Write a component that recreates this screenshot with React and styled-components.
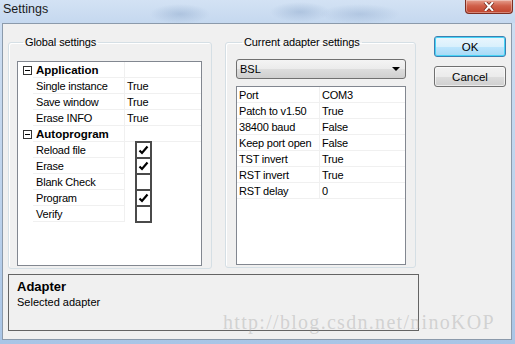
import React from "react";
import styled, { createGlobalStyle } from "styled-components";

const GlobalStyle = createGlobalStyle`
  html, body {
    margin: 0;
    padding: 0;
    background: #fff;
  }
  body {
    font-family: "Liberation Sans", Arial, sans-serif;
    font-size: 11px;
    color: #000;
  }
`;

const Window = styled.div`
  position: relative;
  width: 515px;
  height: 344px;
  display: flex;
  flex-direction: column;
  background: linear-gradient(180deg, #cfdff2 0%, #bcd2ec 60%, #a9c5e6 100%);
  overflow: hidden;
`;

const TitleBar = styled.div`
  height: 23px;
  display: flex;
  justify-content: space-between;
  align-items: flex-start;
  background:
    radial-gradient(ellipse 30px 10px at 180px 14px, rgba(120, 150, 190, 0.35), transparent),
    radial-gradient(ellipse 30px 10px at 300px 12px, rgba(120, 150, 190, 0.35), transparent),
    radial-gradient(ellipse 40px 10px at 360px 14px, rgba(120, 150, 190, 0.3), transparent),
    linear-gradient(180deg, #d3e2f4 0%, #c5d8ef 100%);
`;

const Title = styled.div`
  padding: 2px 0 0 3px;
  font-family: "Liberation Sans", Arial, sans-serif;
  font-size: 12.5px;
  color: #1a1a1a;
`;

const CloseButton = styled.div`
  width: 46px;
  height: 13px;
  margin-right: 2px;
  display: flex;
  align-items: center;
  justify-content: center;
  border: 1px solid #7d2e22;
  border-top: none;
  border-radius: 0 0 4px 4px;
  background: linear-gradient(180deg, #e6a08f 0%, #d0604a 45%, #c0432c 100%);
  box-shadow: inset 0 0 0 1px rgba(255, 255, 255, 0.35);
`;

const Body = styled.div`
  flex: 1;
  margin: 0 3px 4px 2px;
  border: 1px solid #8b9aab;
  background: #f0f0f0;
  padding: 12px 0 8px 5px;
  display: flex;
  flex-direction: column;
  gap: 5px;
`;

const Main = styled.div`
  display: flex;
  align-items: flex-start;
`;

const Group = styled.fieldset`
  margin: 0;
  margin-right: ${(p) => p.$gapRight}px;
  width: ${(p) => p.$width}px;
  box-sizing: border-box;
  border: 1px solid #d5dfe5;
  border-radius: 3px;
  box-shadow: inset 1px 1px 0 #fff;
  padding: ${(p) => p.$padTop}px 9px 2px ${(p) => p.$padLeft}px;
  display: flex;
  flex-direction: column;
  gap: 7px;
`;

const Legend = styled.legend`
  padding: 0 2px;
  margin-left: 6px;
  font-size: 11px;
  letter-spacing: -0.1px;
  line-height: 13px;
`;

const List = styled.div`
  height: ${(p) => p.$height}px;
  box-sizing: border-box;
  border: 1px solid #828790;
  background: #fff;
  display: flex;
  flex-direction: column;
`;

const Row = styled.div`
  display: flex;
  height: 16px;
`;

const Gutter = styled.div`
  width: 15px;
  flex: none;
  display: flex;
  align-items: center;
  padding-left: 5px;
  box-sizing: border-box;
`;

const ExpandBox = styled.div`
  width: 9px;
  height: 9px;
  box-sizing: border-box;
  border: 1px solid #333;
  display: flex;
  align-items: center;
  justify-content: center;
  &::before {
    content: "";
    width: 5px;
    height: 1px;
    background: #000;
  }
`;

const NameCell = styled.div`
  width: ${(p) => p.$width}px;
  flex: none;
  box-sizing: border-box;
  border-bottom: 1px solid #f0f0f0;
  border-right: 1px solid #f0f0f0;
  padding: 1px 0 0 ${(p) => p.$pad}px;
  line-height: 14px;
  white-space: nowrap;
  font-size: ${(p) => (p.$bold ? "11.5px" : "11px")};
  font-weight: ${(p) => (p.$bold ? 700 : 400)};
  letter-spacing: ${(p) => (p.$bold ? "0" : "-0.2px")};
`;

const ValueCell = styled.div`
  flex: 1;
  box-sizing: border-box;
  border-bottom: 1px solid #f0f0f0;
  padding: 1px 0 0 2px;
  line-height: 14px;
  white-space: nowrap;
  letter-spacing: -0.2px;
`;

const CheckCell = styled(ValueCell)`
  padding: 0 0 0 10px;
  border-bottom: none;
`;

const CheckBox = styled.div`
  width: 17px;
  height: 18px;
  margin: -1px 0;
  box-sizing: border-box;
  border: 2px solid #4a4a4a;
  display: flex;
  align-items: center;
  justify-content: center;
  background: #fff;
`;

const Select = styled.div`
  height: 20px;
  box-sizing: border-box;
  border: 1px solid #707070;
  border-radius: 3px;
  background: linear-gradient(180deg, #f4f4f4 0%, #ebebeb 50%, #dddddd 51%, #cfcfcf 100%);
  display: flex;
  align-items: center;
  justify-content: space-between;
  padding: 0 5px 0 3px;
  font-size: 11px;
`;

const Arrow = styled.div`
  width: 0;
  height: 0;
  border-left: 4px solid transparent;
  border-right: 4px solid transparent;
  border-top: 4px solid #000;
`;

const ButtonColumn = styled.div`
  display: flex;
  flex-direction: column;
  gap: 9px;
  width: 72px;
`;

const Button = styled.div`
  height: 21px;
  box-sizing: border-box;
  border-radius: 3px;
  display: flex;
  align-items: center;
  justify-content: center;
  font-size: 11.5px;
  border: 1px solid ${(p) => (p.$focused ? "#3c7fb1" : "#707070")};
  background: ${(p) =>
    p.$focused
      ? "linear-gradient(180deg, #eaf6fd 0%, #d9f0fc 50%, #bee6fd 51%, #a7d9f5 100%)"
      : "linear-gradient(180deg, #f2f2f2 0%, #ebebeb 50%, #dddddd 51%, #cfcfcf 100%)"};
  box-shadow: inset 0 0 0 1px ${(p) => (p.$focused ? "#48d4f6" : "rgba(255,255,255,0.6)")};
`;

const Description = styled.div`
  width: 411px;
  height: 57px;
  box-sizing: border-box;
  border: 1px solid #646464;
  padding: 4px 0 0 8px;
  display: flex;
  flex-direction: column;
`;

const DescTitle = styled.div`
  font-size: 13px;
  font-weight: 700;
  line-height: 15px;
`;

const DescText = styled.div`
  font-size: 11px;
  line-height: 16px;
`;

const Watermark = styled.div`
  position: absolute;
  left: 223px;
  top: 311px;
  font-family: "Liberation Serif", "Times New Roman", serif;
  font-size: 20px;
  letter-spacing: 1.3px;
  color: rgba(160, 160, 160, 0.4);
  pointer-events: none;
`;

const Check = () => (
  <svg width="11" height="10" viewBox="0 0 11 10">
    <path d="M1.5 5.5 L4 8 L9.5 1.5" fill="none" stroke="#000" strokeWidth="2.2" />
  </svg>
);

const CloseX = () => (
  <svg width="12" height="9" viewBox="0 0 12 9">
    <path d="M2 0 L10 9 M10 0 L2 9" stroke="#6b2318" strokeWidth="3.4" />
    <path d="M2 0 L10 9 M10 0 L2 9" stroke="#fff" strokeWidth="2" />
  </svg>
);

const globalSections = [
  {
    title: "Application",
    rows: [
      { name: "Single instance", value: "True" },
      { name: "Save window", value: "True" },
      { name: "Erase INFO", value: "True" },
    ],
  },
  {
    title: "Autoprogram",
    rows: [
      { name: "Reload file", check: true },
      { name: "Erase", check: true },
      { name: "Blank Check", check: false },
      { name: "Program", check: true },
      { name: "Verify", check: false },
    ],
  },
];

const adapterRows = [
  ["Port", "COM3"],
  ["Patch to v1.50", "True"],
  ["38400 baud", "False"],
  ["Keep port open", "False"],
  ["TST invert", "True"],
  ["RST invert", "True"],
  ["RST delay", "0"],
];

export default function App() {
  return (
    <>
      <GlobalStyle />
      <Window>
        <TitleBar>
          <Title>Settings</Title>
          <CloseButton>
            <CloseX />
          </CloseButton>
        </TitleBar>
        <Body>
          <Main>
            <Group $width={204} $gapRight={13} $padTop={12} $padLeft={8}>
              <Legend>Global settings</Legend>
              <List $height={205}>
                {globalSections.map((section) => (
                  <React.Fragment key={section.title}>
                    <Row>
                      <Gutter>
                        <ExpandBox />
                      </Gutter>
                      <NameCell $width={92} $pad={3} $bold>
                        {section.title}
                      </NameCell>
                      <ValueCell />
                    </Row>
                    {section.rows.map((r) => (
                      <Row key={r.name}>
                        <Gutter />
                        <NameCell $width={92} $pad={3}>
                          {r.name}
                        </NameCell>
                        {"check" in r ? (
                          <CheckCell>
                            <CheckBox>{r.check && <Check />}</CheckBox>
                          </CheckCell>
                        ) : (
                          <ValueCell>{r.value}</ValueCell>
                        )}
                      </Row>
                    ))}
                  </React.Fragment>
                ))}
              </List>
            </Group>
            <Group $width={191} $gapRight={18} $padTop={10} $padLeft={10}>
              <Legend>Current adapter settings</Legend>
              <Select>
                <span>BSL</span>
                <Arrow />
              </Select>
              <List $height={179}>
                {adapterRows.map(([name, value]) => (
                  <Row key={name}>
                    <NameCell $width={83} $pad={2}>
                      {name}
                    </NameCell>
                    <ValueCell>{value}</ValueCell>
                  </Row>
                ))}
              </List>
            </Group>
            <ButtonColumn>
              <Button $focused>OK</Button>
              <Button>Cancel</Button>
            </ButtonColumn>
          </Main>
          <Description>
            <DescTitle>Adapter</DescTitle>
            <DescText>Selected adapter</DescText>
          </Description>
        </Body>
        <Watermark>http://blog.csdn.net/ninoKOP</Watermark>
      </Window>
    </>
  );
}
